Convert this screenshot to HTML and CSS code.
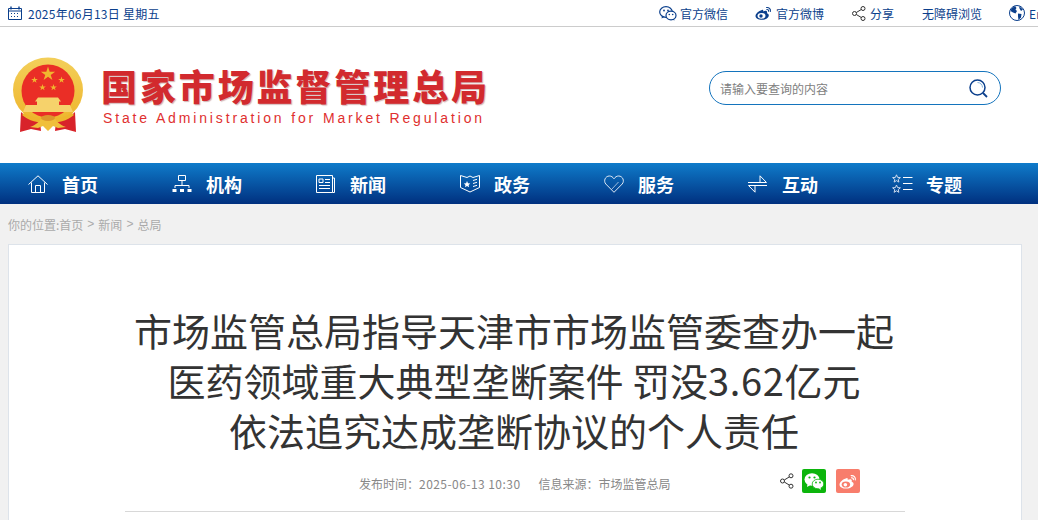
FILE: index.html
```html
<!DOCTYPE html>
<html lang="zh-CN">
<head>
    <meta charset="UTF-8">
    <meta name="viewport" content="width=device-width, initial-scale=1.0">
    <title>市场监管总局指导天津市市场监管委查办一起医药领域重大典型垄断案件</title>
    <link rel="stylesheet" href="styles.css">
</head>
<body>
    <div class="topbar">
        <div class="date">
            <svg class="ico-date" width="14" height="14" viewBox="0 0 14 14">
                <path d="M.5 2.500h13v11H.5zM.5 5h13" fill="none" stroke="#0b3f8c"/>
                <path d="M3 .5v3M11 .5v3" stroke="#0b3f8c" stroke-width="1.400"/>
                <path d="M3 7h1v1H3zM6 7h1v1H6zM9 7h1v1H9zM3 10h1v1H3zM6 10h1v1H6zM9 10h1v1H9z" fill="#0b3f8c"/>
            </svg>
            <span>2025年06月13日 星期五</span>
        </div>
        <div class="toplinks">
            <a class="toplink">
                <svg width="18" height="15" viewBox="0 0 18 15">
                    <ellipse cx="7" cy="6" rx="6.300" ry="5.300" fill="#fff" stroke="#0b3f8c" stroke-width="1.200"/>
                    <path d="M3 10l-.5 2.500L5.500 11z" fill="#0b3f8c"/>
                    <ellipse cx="12" cy="9.500" rx="5" ry="4.300" fill="#fff" stroke="#0b3f8c" stroke-width="1.200"/>
                    <path d="M15 13l.5 1.500-2.500-1z" fill="#0b3f8c"/>
                    <circle cx="5" cy="4.500" r=".9" fill="#0b3f8c"/><circle cx="9" cy="4.500" r=".9" fill="#0b3f8c"/>
                    <circle cx="10.300" cy="8.500" r=".8" fill="#0b3f8c"/><circle cx="13.700" cy="8.500" r=".8" fill="#0b3f8c"/>
                </svg>
                <span>官方微信</span>
            </a>
            <i class="sep"></i>
            <a class="toplink tl-wide">
                <svg width="17" height="14" viewBox="0 0 17 14">
                    <path d="M7 4C3.500 5 .5 7.800.5 10c0 2.300 3 3.700 6.300 3.700 4 0 7-2.200 7-4.300 0-1.300-1-1.800-1.900-2.100.4-1 .3-1.900-.4-2.300-.9-.5-2.400 0-3.300.4.300-1.200-.2-2.100-1.200-1.400z" fill="#0b3f8c"/>
                    <ellipse cx="6.500" cy="9.800" rx="4" ry="2.900" fill="#fff"/>
                    <circle cx="6" cy="10" r="1.700" fill="#0b3f8c"/>
                    <path d="M11.500 1.500c2.400-.4 4.400 1.600 3.900 4M11.800 3.500c1.200-.2 2 .7 1.800 1.800" fill="none" stroke="#0b3f8c" stroke-width="1.100" stroke-linecap="round"/>
                </svg>
                <span>官方微博</span>
            </a>
            <i class="sep"></i>
            <a class="toplink tl-wide tl-shift">
                <svg width="14" height="15" viewBox="0 0 14 15">
                    <g fill="none" stroke="#333" stroke-width="1">
                        <circle cx="2.500" cy="7.500" r="2"/><circle cx="11" cy="2.500" r="2"/><circle cx="11" cy="12.500" r="2"/>
                        <path d="M4.300 6.500l5-3M4.300 8.500l5 3"/>
                    </g>
                </svg>
                <span>分享</span>
            </a>
            <i class="sep"></i>
            <a class="toplink tl-shift"><span>无障碍浏览</span></a>
            <i class="sep"></i>
            <a class="toplink tl-wide">
                <svg width="16" height="16" viewBox="0 0 16 16">
                    <circle cx="8" cy="8" r="7.500" fill="#fff" stroke="#0b3f8c"/>
                    <path d="M6 1L7.500 3l-1 1.500L8 6 6.500 8.500 4 7.500 1.500 6 2.500 3.500zM9 8.500l3.500 .5L12 12.500 9.500 15 9 11.500zM10 1l4 3.500-2 1.500-1.500-2.500z" fill="#0b3f8c"/>
                </svg>
                <span>En</span>
            </a>
        </div>
    </div>

    <header class="masthead">
        <a class="brand">
            <svg class="emblem" width="72" height="76" viewBox="0 0 72 76">
                <defs>
                    <linearGradient id="ringGold" x1="0" y1="0" x2="0" y2="1">
                        <stop offset="0" stop-color="#f3cf5a"/>
                        <stop offset="1" stop-color="#eeb52c"/>
                    </linearGradient>
                    <path id="star" d="M0-1L.224-.309H.951L.363 .118 .588 .809 0 .382-.588 .809-.363 .118-.951-.309H-.224z"/>
                </defs>
                <ellipse cx="36" cy="33" rx="35" ry="32.500" fill="url(#ringGold)"/>
                <circle cx="36" cy="34" r="26.500" fill="#ea2e26"/>
                <g fill="#f0b62f">
                    <use href="#star" transform="translate(36 17) scale(7.500)"/>
                    <use href="#star" transform="translate(22.500 23) scale(3.500)"/>
                    <use href="#star" transform="translate(49.500 23) scale(3.500)"/>
                    <use href="#star" transform="translate(30.500 30.500) scale(3.500)"/>
                    <use href="#star" transform="translate(41.500 30.500) scale(3.500)"/>
                </g>
                <path d="M26 40.500H46L49 44.500H23zM25 44.500H47V48H25zM14 48H58L61 55H11z" fill="#f6d26b"/>
                <path d="M9 55C14 60 20 63 28 64L29 74 19 72 8 75zM63 55C58 60 52 63 44 64L43 74 53 72 64 75z" fill="#d8232a"/>
                <path d="M12 56C18 60 26 61 36 61S54 60 60 56L62 58C55 64 46 66 36 66S17 64 10 58z" fill="#eeb52c"/>
                <path d="M18 70C24 68 28 64 31 59H41C44 64 48 68 54 70L46 71 41 69 36 74 31 69 26 71z" fill="#f0bf3b"/>
                <ellipse cx="36" cy="61" rx="7" ry="3" fill="#dc962c"/>
            </svg>
            <div class="brand-text">
                <div class="brand-cn">国家市场监督管理总局</div>
                <div class="brand-en">State Administration for Market Regulation</div>
            </div>
        </a>
        <div class="search">
            <span class="search-hint">请输入要查询的内容</span>
            <svg width="19" height="19" viewBox="0 0 19 19">
                <circle cx="8.500" cy="8.500" r="7.500" fill="none" stroke="#0b3f8c" stroke-width="1.500"/>
                <path d="M8.500 3.500a5 5 0 0 1 5 5" fill="none" stroke="#7fb0d9"/>
                <path d="M14 14l4 4" stroke="#0b3f8c" stroke-width="1.800"/>
            </svg>
        </div>
    </header>

    <nav class="mainnav">
        <a class="nav-item">
            <svg width="20" height="18" viewBox="0 0 20 18" fill="none" stroke="#fff">
                <path d="M.5 9.500L10 .8l9.500 8.700M3.500 7.500v10h13v-10M7.500 17.500v-7h5v7"/>
            </svg>
            <span>首页</span>
        </a>
        <a class="nav-item">
            <svg width="20" height="18" viewBox="0 0 20 18" fill="none" stroke="#fff">
                <path d="M6.500 .5h7v5h-7zM10 5.500V10M3 13v-2.500h14V13"/>
                <path d="M.5 14h4v3h-4zM8 14h4v3H8zM15.500 14h4v3h-4z" fill="#fff" stroke="none"/>
            </svg>
            <span>机构</span>
        </a>
        <a class="nav-item">
            <svg width="19" height="18" viewBox="0 0 19 18" fill="none" stroke="#fff">
                <path d="M.5 .5h16v17H.5zM16.500 3h2v14.500h-2"/>
                <path d="M3 4h4v3.500H3zM9 4.500h5M9 7.500h5M3 10.500h11M3 13.500h11"/>
            </svg>
            <span>新闻</span>
        </a>
        <a class="nav-item">
            <svg width="20" height="19" viewBox="0 0 20 19" fill="none" stroke="#fff">
                <path d="M.5 1.500L7 3.500 10 2l3 1.500 6.500-2v12L10 18 .5 13.500z"/>
                <path d="M13 6.500l4-1.200M13 9.500l4-1.200M13 12.500l4-1.200"/>
                <path d="M7 7l1 2.200 2.300.2-1.700 1.500.5 2.300L7 11.900 5 13.200l.5-2.300-1.700-1.500 2.300-.2z" fill="#fff" stroke="none"/>
            </svg>
            <span>政务</span>
        </a>
        <a class="nav-item">
            <svg width="20" height="18" viewBox="0 0 20 18" fill="none" stroke="#dfe9f5">
                <path d="M10 17.300L1.800 9C-.8 6 1.300 1 5.300 1c2 0 3.500 1 4.700 2.800C11.200 2 12.700 1 14.700 1c4 0 6.100 5 3.500 8z"/>
                <path d="M7.500 14.500l7-7.500" stroke-width=".7"/>
            </svg>
            <span>服务</span>
        </a>
        <a class="nav-item">
            <svg width="19" height="18" viewBox="0 0 19 18" fill="none" stroke="#fff">
                <path d="M0 7.500h18.500L12 .8v6.700M19 10.500H.5L7 17.200v-6.700"/>
            </svg>
            <span>互动</span>
        </a>
        <a class="nav-item">
            <svg width="21" height="20" viewBox="0 0 21 20" fill="none" stroke="#cfdcee">
                <path d="M4.500 .8l1.100 2.600 2.800.2-2.200 1.800.7 2.700-2.400-1.500-2.400 1.500.7-2.700L.6 3.600l2.800-.2zM4.500 11l1.100 2.600 2.800.2-2.200 1.800.7 2.700-2.400-1.500-2.400 1.500.7-2.700-2.200-1.800 2.800-.2z"/>
                <path d="M11 3.500h9.500M11 9.500h9.500M11 15.500h9.500" stroke="#fff"/>
            </svg>
            <span>专题</span>
        </a>
    </nav>

    <main class="page">
        <div class="crumbs">
            <span>你的位置:首页</span><b>&gt;</b><span>新闻</span><b>&gt;</b><span>总局</span>
        </div>
        <article class="article">
            <h1 class="article-title">市场监管总局指导天津市市场监管委查办一起<br>医药领域重大典型垄断案件 罚没<span class="title-num">3.62</span>亿元<br>依法追究达成垄断协议的个人责任</h1>
            <div class="article-meta">
                <span>发布时间：<span class="meta-date">2025-06-13 10:30</span></span>
                <span class="meta-source">信息来源：市场监管总局</span>
                <div class="meta-share">
                    <svg class="share-ico" width="14" height="16" viewBox="0 0 14 16">
                        <g fill="none" stroke="#333" stroke-width="1">
                            <circle cx="2.500" cy="8" r="2"/><circle cx="11" cy="2.800" r="2"/><circle cx="11" cy="13.200" r="2"/>
                            <path d="M4.300 7l5-3.100M4.300 9l5 3.100"/>
                        </g>
                    </svg>
                    <a class="share-btn btn-wechat">
                        <svg width="20" height="17" viewBox="0 0 20 17">
                            <ellipse cx="8" cy="6.500" rx="7.500" ry="6.200" fill="#fff"/>
                            <path d="M3.500 11L3 14l3.500-2z" fill="#fff"/>
                            <ellipse cx="14" cy="11" rx="5.800" ry="4.800" fill="#fff" stroke="#0cb50c" stroke-width=".8"/>
                            <path d="M16.500 15l.6 1.800-2.800-1.300z" fill="#fff"/>
                            <circle cx="5.500" cy="4.500" r="1.100" fill="#0cb50c"/><circle cx="10.500" cy="4.500" r="1.100" fill="#0cb50c"/>
                            <circle cx="12" cy="9.500" r=".9" fill="#0cb50c"/><circle cx="16" cy="9.500" r=".9" fill="#0cb50c"/>
                        </svg>
                    </a>
                    <a class="share-btn btn-weibo">
                        <svg width="18" height="15" viewBox="0 0 17 14">
                            <path d="M7 4C3.500 5 .5 7.800.5 10c0 2.300 3 3.700 6.300 3.700 4 0 7-2.200 7-4.300 0-1.300-1-1.800-1.900-2.100.4-1 .3-1.900-.4-2.300-.9-.5-2.400 0-3.300.4.300-1.200-.2-2.100-1.200-1.400z" fill="#fff"/>
                            <ellipse cx="6.500" cy="9.800" rx="4" ry="2.900" fill="#f87d6c"/>
                            <circle cx="6" cy="10" r="1.700" fill="#fff"/>
                            <path d="M11.500 1.500c2.400-.4 4.400 1.600 3.900 4M11.800 3.500c1.200-.2 2 .7 1.800 1.800" fill="none" stroke="#fff" stroke-width="1.100" stroke-linecap="round"/>
                        </svg>
                    </a>
                </div>
            </div>
            <div class="article-rule"></div>
        </article>
    </main>
</body>
</html>
```

FILE: styles.css
```css
* {
    margin: 0;
    padding: 0;
    box-sizing: border-box;
}

html, body {
    height: 520px;
    overflow: hidden;
}

body {
    font-family: "Noto Sans CJK SC", "Liberation Sans", sans-serif;
    background: #fff;
    color: #333;
    font-size: 12px;
}

svg {
    display: block;
    flex: none;
}

.topbar {
    height: 27px;
    border-bottom: 1px solid #ccc;
    display: flex;
    justify-content: space-between;
    align-items: center;
    color: #0b3f8c;
    white-space: nowrap;
    overflow: hidden;
}

.date {
    display: flex;
    align-items: center;
    padding-left: 8px;
    gap: 6px;
    letter-spacing: .25px;
}

.toplinks {
    display: flex;
    align-items: center;
    width: 379px;
    flex: none;
}

.toplink {
    display: flex;
    align-items: center;
    gap: 3px;
}

.tl-wide {
    gap: 4px;
}

.tl-shift {
    margin-left: 1px;
}

.sep {
    width: 1px;
    height: 12px;
    background: #0b5ea8;
    margin: 0 13px 0 14px;
}

.masthead {
    height: 136px;
    display: flex;
    justify-content: space-between;
    align-items: center;
    padding: 0 37px 0 12px;
}

.brand {
    display: flex;
    align-items: center;
    gap: 17px;
}

.brand-text {
    padding-bottom: 1px;
}

.brand-cn {
    font-size: 36px;
    font-weight: 900;
    line-height: 44px;
    letter-spacing: 2.9px;
    color: #d22a2e;
    text-shadow: 1px 1px 1px rgba(120, 40, 40, .35);
    white-space: nowrap;
}

.brand-en {
    font-family: "Liberation Sans", sans-serif;
    font-size: 14px;
    line-height: 18px;
    letter-spacing: 2.85px;
    color: #e0302f;
    padding-left: 2px;
    margin-top: 2px;
    white-space: nowrap;
}

.search {
    width: 292px;
    height: 34px;
    margin-bottom: 14px;
    border: 1px solid #1474bd;
    border-radius: 17px;
    display: flex;
    justify-content: space-between;
    align-items: center;
    padding: 0 12px 0 10px;
}

.search-hint {
    color: #808080;
}

.mainnav {
    height: 41px;
    background: linear-gradient(#0f7bca, #00307f);
    display: flex;
    align-items: center;
    padding-left: 28px;
}

.nav-item {
    width: 144px;
    flex: none;
    display: grid;
    grid-template-columns: 34px auto;
    justify-content: start;
    align-items: center;
    color: #fff;
    font-size: 18px;
    font-weight: 700;
}

.page {
    background: #f1f1f1;
    height: 316px;
    padding: 0 16px 0 8px;
    overflow: hidden;
}

.crumbs {
    height: 40px;
    display: flex;
    align-items: center;
    color: #aaa;
}

.crumbs b {
    font-weight: 400;
    font-family: "Liberation Sans", sans-serif;
    margin: 0 4px;
}

.article {
    background: #fff;
    border: 1px solid #dde3ea;
    height: 400px;
    padding-top: 60px;
}

.article-title {
    font-size: 38px;
    font-weight: 400;
    line-height: 50px;
    color: #333;
    text-align: center;
    white-space: nowrap;
    padding-right: 2px;
}

.title-num {
    letter-spacing: .7px;
}

.article-meta {
    margin-top: 14px;
    height: 28px;
    display: flex;
    align-items: center;
    padding-left: 350px;
    color: #888;
}

.meta-date {
    letter-spacing: .45px;
}

.meta-source {
    margin-left: 18px;
}

.meta-share {
    display: flex;
    align-items: center;
    margin-left: 109px;
    margin-bottom: 4px;
}

.share-ico {
    margin-right: 8px;
}

.share-btn {
    width: 24px;
    height: 24px;
    border-radius: 2px;
    display: flex;
    align-items: center;
    justify-content: center;
}

.btn-wechat {
    background: #0cb50c;
    margin-right: 10px;
}

.btn-weibo {
    background: #f87d6c;
}

.article-rule {
    margin: 14px 116px 0;
    border-top: 1px solid #d8d8d8;
}
```
